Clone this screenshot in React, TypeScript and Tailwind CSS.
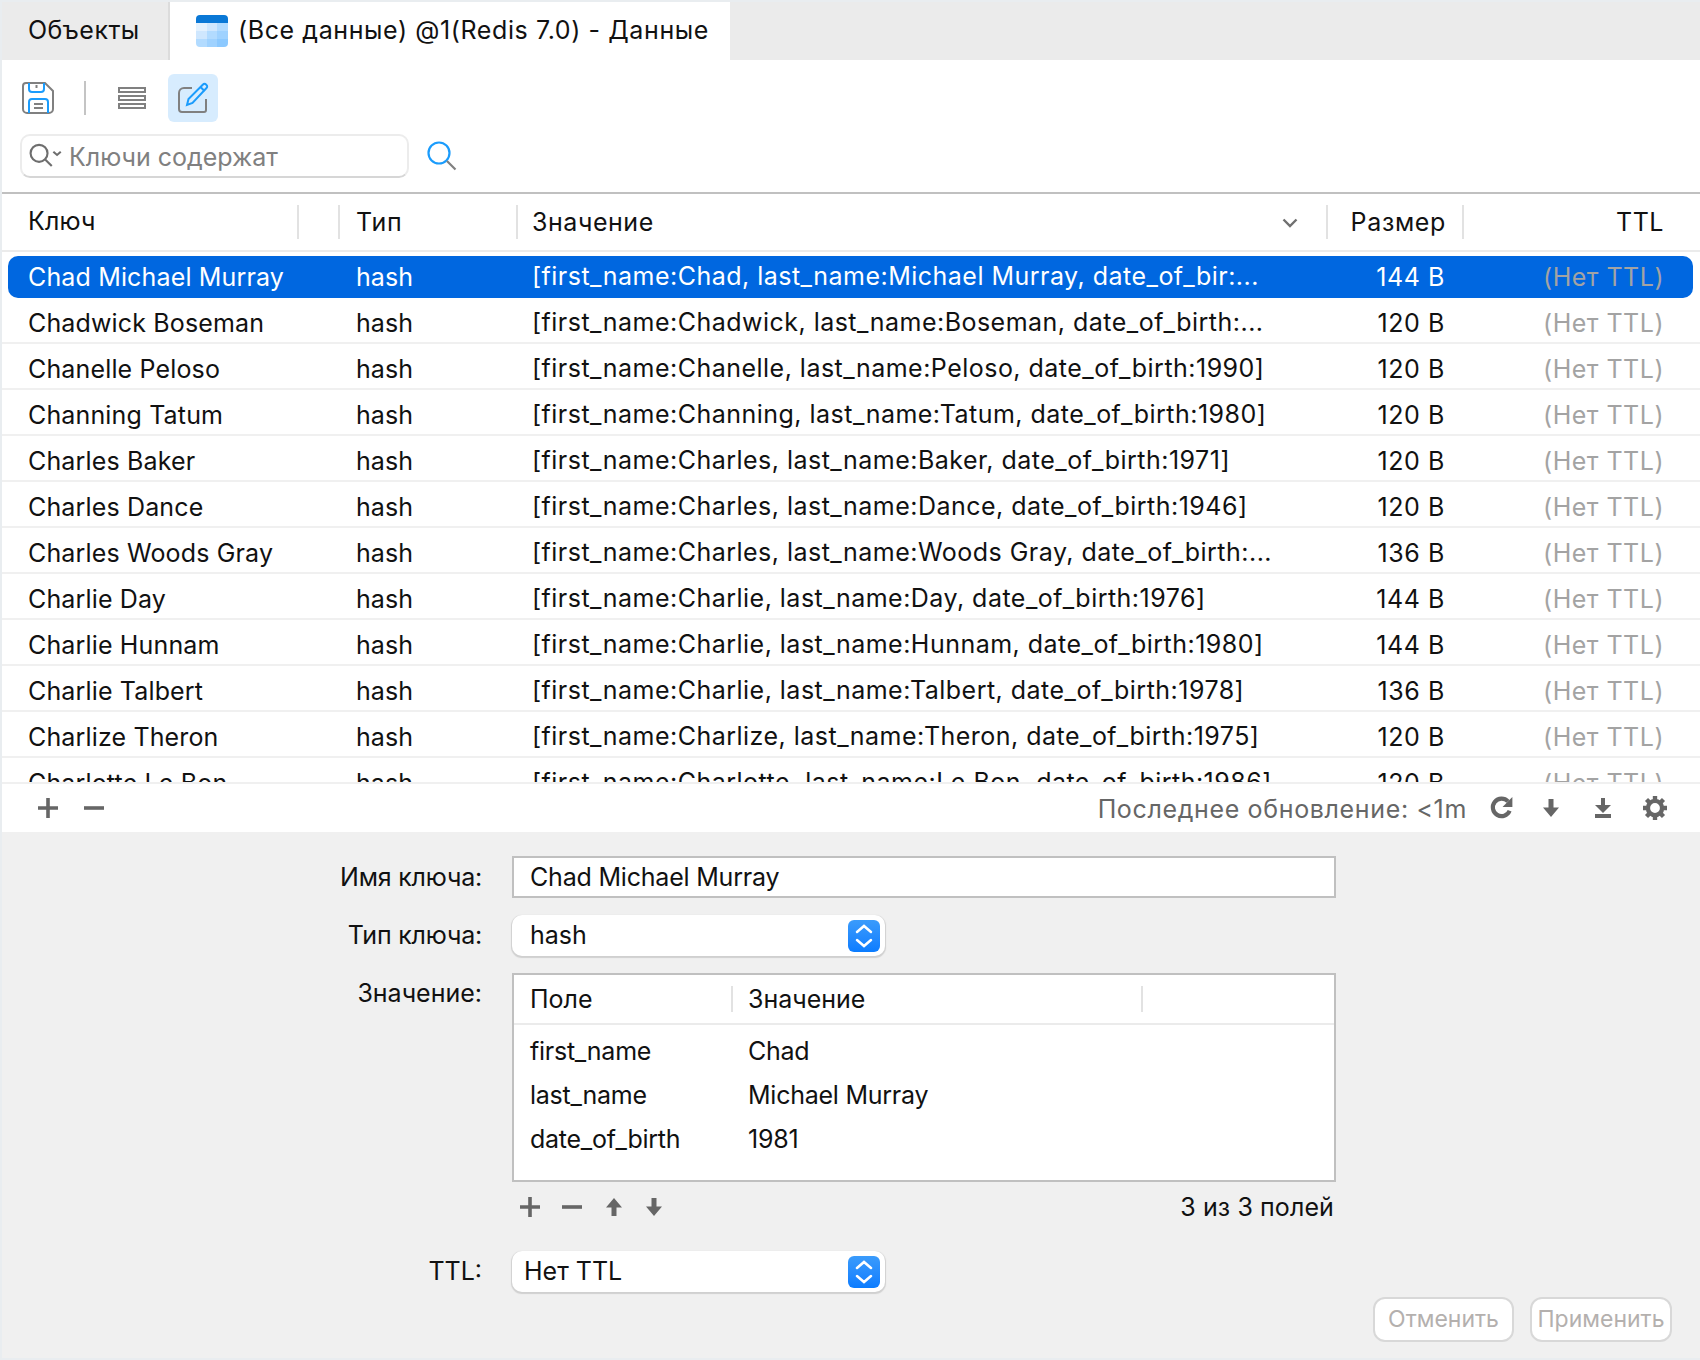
import React from 'react';

const rows = [
  ['Chad Michael Murray', '[first_name:Chad, last_name:Michael Murray, date_of_bir:...', '144 B'],
  ['Chadwick Boseman', '[first_name:Chadwick, last_name:Boseman, date_of_birth:...', '120 B'],
  ['Chanelle Peloso', '[first_name:Chanelle, last_name:Peloso, date_of_birth:1990]', '120 B'],
  ['Channing Tatum', '[first_name:Channing, last_name:Tatum, date_of_birth:1980]', '120 B'],
  ['Charles Baker', '[first_name:Charles, last_name:Baker, date_of_birth:1971]', '120 B'],
  ['Charles Dance', '[first_name:Charles, last_name:Dance, date_of_birth:1946]', '120 B'],
  ['Charles Woods Gray', '[first_name:Charles, last_name:Woods Gray, date_of_birth:...', '136 B'],
  ['Charlie Day', '[first_name:Charlie, last_name:Day, date_of_birth:1976]', '144 B'],
  ['Charlie Hunnam', '[first_name:Charlie, last_name:Hunnam, date_of_birth:1980]', '144 B'],
  ['Charlie Talbert', '[first_name:Charlie, last_name:Talbert, date_of_birth:1978]', '136 B'],
  ['Charlize Theron', '[first_name:Charlize, last_name:Theron, date_of_birth:1975]', '120 B'],
  ['Charlotte Le Bon', '[first_name:Charlotte, last_name:Le Bon, date_of_birth:1986]', '120 B'],
];

const fields = [
  ['first_name', 'Chad'],
  ['last_name', 'Michael Murray'],
  ['date_of_birth', '1981'],
];

const TableIcon = () => (
  <svg width="32" height="32" viewBox="0 0 32 32" className="shrink-0">
    <path d="M0 9V4a4 4 0 0 1 4-4h24a4 4 0 0 1 4 4v5z" fill="#0a78d6" />
    <path d="M0 8h11v8H0z" fill="#e3f1fe" />
    <path d="M11 8h10v8H11z" fill="#cfe7fe" />
    <path d="M21 8h11v8H21z" fill="#b2dbff" />
    <path d="M0 16h11v8H0z" fill="#cfe7fe" />
    <path d="M11 16h10v8H11z" fill="#b2dbff" />
    <path d="M21 16h11v8H21z" fill="#9fd2ff" />
    <path d="M0 24h11v8H4a4 4 0 0 1-4-4z" fill="#b2dbff" />
    <path d="M11 24h10v8H11z" fill="#9fd2ff" />
    <path d="M21 24h11v4a4 4 0 0 1-4 4h-7z" fill="#8cc9ff" />
  </svg>
);

const SaveIcon = () => (
  <svg width="32" height="32" viewBox="0 0 32 32" fill="none" className="shrink-0">
    <path d="M4 1h19l8 8v18a4 4 0 0 1-4 4H5a4 4 0 0 1-4-4V4a3 3 0 0 1 3-3z" stroke="#808080" strokeWidth="2" />
    <path d="M7 1v6a3 3 0 0 0 3 3h9a3 3 0 0 0 3-3V1" stroke="#1b9cfc" strokeWidth="2" />
    <path d="M14.5 3v3" stroke="#808080" strokeWidth="2" />
    <path d="M7 31V20a3 3 0 0 1 3-3h13a3 3 0 0 1 3 3v11" stroke="#1b9cfc" strokeWidth="2" />
    <path d="M12 22h9M12 26h9" stroke="#808080" strokeWidth="2" />
  </svg>
);

const ListIcon = () => (
  <svg width="28" height="22" viewBox="0 0 28 22" fill="none" className="shrink-0">
    <path d="M1 1h26v4H1zM1 9h26v4H1zM1 17h26v4H1z" stroke="#808080" strokeWidth="2" />
  </svg>
);

const EditIcon = () => (
  <svg width="31" height="32" viewBox="0 0 31 32" fill="none" className="shrink-0">
    <path d="M14 6H6a5 5 0 0 0-5 5v16a3 3 0 0 0 3 3h22a2 2 0 0 0 2-2V17" stroke="#808080" strokeWidth="2" />
    <path d="M9 23l1.5-6L25 2.5a2 2 0 0 1 3 0l.5.5a2 2 0 0 1 0 3L14.5 21z" stroke="#1b9cfc" strokeWidth="2" fill="#d7ecfe" />
    <path d="M22.5 5l4 4" stroke="#1b9cfc" strokeWidth="2" />
  </svg>
);

const Plus = () => (
  <svg width="20" height="20" viewBox="0 0 20 20" className="shrink-0">
    <path d="M8.2 0h3.6v8.2H20v3.6h-8.2V20H8.2v-8.2H0V8.2h8.2z" fill="#666" />
  </svg>
);

const Minus = () => (
  <svg width="20" height="20" viewBox="0 0 20 20" className="shrink-0">
    <path d="M0 8.2h20v3.6H0z" fill="#666" />
  </svg>
);

const ArrowDown = () => (
  <svg width="16" height="18" viewBox="0 0 16 18" className="shrink-0">
    <path d="M5.5 0h5v8.5H16L8 18 0 8.5h5.5z" fill="#666" />
  </svg>
);

const ArrowUp = () => (
  <svg width="16" height="18" viewBox="0 0 16 18" className="shrink-0">
    <path d="M5.5 18h5V9.5H16L8 0 0 9.5h5.5z" fill="#666" />
  </svg>
);

const Stepper = () => (
  <div className="flex h-8 w-8 shrink-0 items-center justify-center rounded-[6px] bg-gradient-to-b from-[#3a9bfb] to-[#0a7cff]">
    <svg width="20" height="26" viewBox="0 0 20 26" fill="none">
      <path d="M3 9l7-6 7 6M3 17l7 6 7-6" stroke="#fff" strokeWidth="2.5" strokeLinecap="round" />
    </svg>
  </div>
);

const Select = ({ label, pad }: { label: string; pad: string }) => (
  <div className={`flex h-[41px] w-[373px] items-center justify-between rounded-[10px] bg-white pr-[5px] shadow-[0_1px_1px_1px_#d0d0d0] ${pad}`}>
    <span>{label}</span>
    <Stepper />
  </div>
);

export default function App() {
  return (
    <div className="h-[1360px] w-[1700px] overflow-hidden bg-[#e9edf0] pb-[2px] pl-[2px] pt-[2px] font-['Inter',sans-serif] text-[25px] leading-none text-[#111]">
      <div className="flex h-full flex-col bg-white">
        {/* Tabs */}
        <div className="flex h-[58px] shrink-0 bg-[#ebebeb]">
          <div className="flex w-[168px] items-center border-r-2 border-[#dcdcdc] pb-[2px] pl-[26px] tracking-[0.45px]">Объекты</div>
          <div className="flex w-[560px] items-center gap-[10px] bg-white pl-[26px]">
            <TableIcon />
            <span className="pb-[2px] tracking-[0.6px]">(Все данные) @1(Redis 7.0) - Данные</span>
          </div>
        </div>

        {/* Toolbar */}
        <div className="flex h-[134px] shrink-0 flex-col border-b-2 border-[#c0c0c0]">
          <div className="mt-[14px] flex h-[48px] items-center pl-[20px]">
            <SaveIcon />
            <div className="ml-[30px] h-[34px] w-[2px] bg-[#c4c4c4]" />
            <div className="ml-[32px]"><ListIcon /></div>
            <div className="ml-[22px] flex h-[48px] w-[50px] items-center justify-center rounded-[6px] bg-[#d7ecfe]">
              <EditIcon />
            </div>
          </div>
          <div className="mt-[12px] flex items-center pl-[18px]">
            <div className="flex h-[44px] w-[389px] items-center rounded-[10px] border-2 border-[#ececec] border-b-[#d6d6d6] pl-[7px] text-[#808080]">
              <svg width="36" height="26" viewBox="0 0 34 24" fill="none" className="shrink-0">
                <circle cx="9.5" cy="9.5" r="8" stroke="#6e6e6e" strokeWidth="2" />
                <path d="M15.5 15.5l6 6" stroke="#6e6e6e" strokeWidth="2" />
                <path d="M23 8l3.5 3L30 8" stroke="#6e6e6e" strokeWidth="2" />
              </svg>
              <span className="ml-[4px] pt-[3px]">Ключи содержат</span>
            </div>
            <svg width="30" height="30" viewBox="0 0 30 30" fill="none" className="ml-[18px] shrink-0">
              <circle cx="12" cy="12" r="10.5" stroke="#1b9cfc" strokeWidth="2.2" />
              <path d="M20 20l8.5 8.5" stroke="#808080" strokeWidth="2.2" />
            </svg>
          </div>
        </div>

        {/* Column headers */}
        <div className="flex h-[58px] shrink-0 items-center border-b-2 border-[#ebebeb]">
          <div className="w-[295px] pb-[1px] pl-[26px] tracking-[0.2px]">Ключ</div>
          <div className="h-[34px] w-[2px] bg-[#e2e2e2]" />
          <div className="w-[39px]" />
          <div className="h-[34px] w-[2px] bg-[#e2e2e2]" />
          <div className="w-[176px] pl-[16px] pt-[1px] tracking-[0.8px]">Тип</div>
          <div className="h-[34px] w-[2px] bg-[#e2e2e2]" />
          <div className="flex w-[808px] items-center justify-between pl-[14px] pr-[28px] pt-[1px]">
            <span className="tracking-[0.55px]">Значение</span>
            <svg width="16" height="10" viewBox="0 0 16 10" fill="none">
              <path d="M1.5 1.5L8 8l6.5-6.5" stroke="#707070" strokeWidth="2.4" />
            </svg>
          </div>
          <div className="h-[34px] w-[2px] bg-[#e2e2e2]" />
          <div className="w-[134px] pr-[16px] pt-[1px] text-right tracking-[0.65px]">Размер</div>
          <div className="h-[34px] w-[2px] bg-[#e2e2e2]" />
          <div className="flex-1 pr-[36px] pt-[1px] text-right tracking-[0.5px]">TTL</div>
        </div>

        {/* Rows */}
        <div className="h-[530px] shrink-0 overflow-hidden">
          {rows.map((r, i) => (
            <div
              key={r[0]}
              className={
                i === 0
                  ? 'ml-[6px] mr-[7px] mt-[4px] flex h-[42px] items-center rounded-[10px] bg-[#0067e0] text-white'
                  : 'flex h-[46px] items-center border-b-2 border-[#f0f0f0] pt-[6px]'
              }
            >
              <div className={i === 0 ? 'w-[348px] pl-[20px] tracking-[0.15px]' : 'w-[354px] pl-[26px] tracking-[0.15px]'}>{r[0]}</div>
              <div className="w-[176px] tracking-[0.05px]">hash</div>
              <div className="w-[790px] whitespace-nowrap pb-[2px] tracking-[0.48px]">{r[1]}</div>
              <div className="w-[123px] whitespace-nowrap text-right tracking-[0.6px]">{r[2]}</div>
              <div className="w-[219px] text-right tracking-[0.5px] text-[#a3a3a3]">(Нет TTL)</div>
            </div>
          ))}
        </div>

        {/* Status bar */}
        <div className="flex h-[50px] shrink-0 items-center border-t-2 border-[#f0f0f0] text-[#666]">
          <div className="ml-[36px]"><Plus /></div>
          <div className="ml-[26px]"><Minus /></div>
          <span className="ml-auto whitespace-nowrap pt-[2px] tracking-[0.65px]">Последнее обновление: &lt;1m</span>
          <svg width="24" height="24" viewBox="0 0 22 22" fill="none" className="ml-[23px] shrink-0">
            <path d="M18 13.5a8 8 0 1 1-1.5-8.5" stroke="#666" strokeWidth="3.8" />
            <path d="M20.5 1v9h-9z" fill="#666" />
          </svg>
          <div className="ml-[29px]"><ArrowDown /></div>
          <svg width="18" height="20" viewBox="0 0 18 20" className="ml-[35px] shrink-0">
            <path d="M7 0h4v7h6l-8 8-8-8h6zM1 16h16v4H1z" fill="#666" />
          </svg>
          <svg width="24" height="24" viewBox="0 0 22 22" fill="none" className="ml-[31px] mr-[33px] shrink-0">
            <circle cx="11" cy="11" r="6.5" stroke="#666" strokeWidth="4" />
            <path d="M11 0v4M11 18v4M0 11h4M18 11h4M3.2 3.2l3 3M15.8 15.8l3 3M18.8 3.2l-3 3M6.2 15.8l-3 3" stroke="#666" strokeWidth="4" />
          </svg>
        </div>

        {/* Form */}
        <div className="flex-1 bg-[#f0f0f0]">
          <div className="mt-[24px] grid grid-cols-[480px_824px] gap-x-[30px]">
            <div className="flex h-[42px] items-center justify-end tracking-[-0.2px]">Имя ключа:</div>
            <div className="flex h-[42px] items-center border-2 border-[#c0c0c0] bg-white pl-[16px] tracking-[-0.2px]">Chad Michael Murray</div>

            <div className="mt-[17px] flex h-[41px] items-center justify-end tracking-[-0.2px]">Тип ключа:</div>
            <div className="mt-[17px]"><Select label="hash" pad="pl-[18px]" /></div>

            <div className="mt-[17px] flex h-[41px] items-center justify-end">Значение:</div>
            <div className="mt-[17px] flex h-[209px] flex-col border-2 border-[#c0c0c0] bg-white">
              <div className="flex h-[50px] shrink-0 items-center border-b-2 border-[#ebebeb]">
                <div className="w-[217px] pl-[16px]">Поле</div>
                <div className="h-[26px] w-[2px] bg-[#e2e2e2]" />
                <div className="w-[408px] pl-[15px]">Значение</div>
                <div className="h-[26px] w-[2px] bg-[#e2e2e2]" />
              </div>
              <div className="mt-[4px] tracking-[-0.25px]">
                {fields.map((f) => (
                  <div key={f[0]} className="flex h-[44px] items-center">
                    <div className="w-[219px] pl-[16px]">{f[0]}</div>
                    <div className="pl-[15px]">{f[1]}</div>
                  </div>
                ))}
              </div>
            </div>

            <div />
            <div className="mt-[14px] flex h-[22px] items-center pl-[8px]">
              <Plus />
              <div className="ml-[22px]"><Minus /></div>
              <div className="ml-[24px]"><ArrowUp /></div>
              <div className="ml-[24px]"><ArrowDown /></div>
              <span className="ml-auto pr-[2px] tracking-[0.1px]">3 из 3 полей</span>
            </div>

            <div className="mt-[33px] flex h-[41px] items-center justify-end">TTL:</div>
            <div className="mt-[33px]"><Select label="Нет TTL" pad="pl-[12px]" /></div>
          </div>

          <div className="mt-[5px] flex justify-end gap-[16px] pr-[28px] text-[23px] text-[#b4b0ae]">
            <div className="flex h-[45px] w-[141px] items-center justify-center rounded-[12px] border-2 border-[#d8d8d8] bg-white">Отменить</div>
            <div className="flex h-[45px] w-[142px] items-center justify-center rounded-[12px] border-2 border-[#d8d8d8] bg-white">Применить</div>
          </div>
        </div>
      </div>
    </div>
  );
}
